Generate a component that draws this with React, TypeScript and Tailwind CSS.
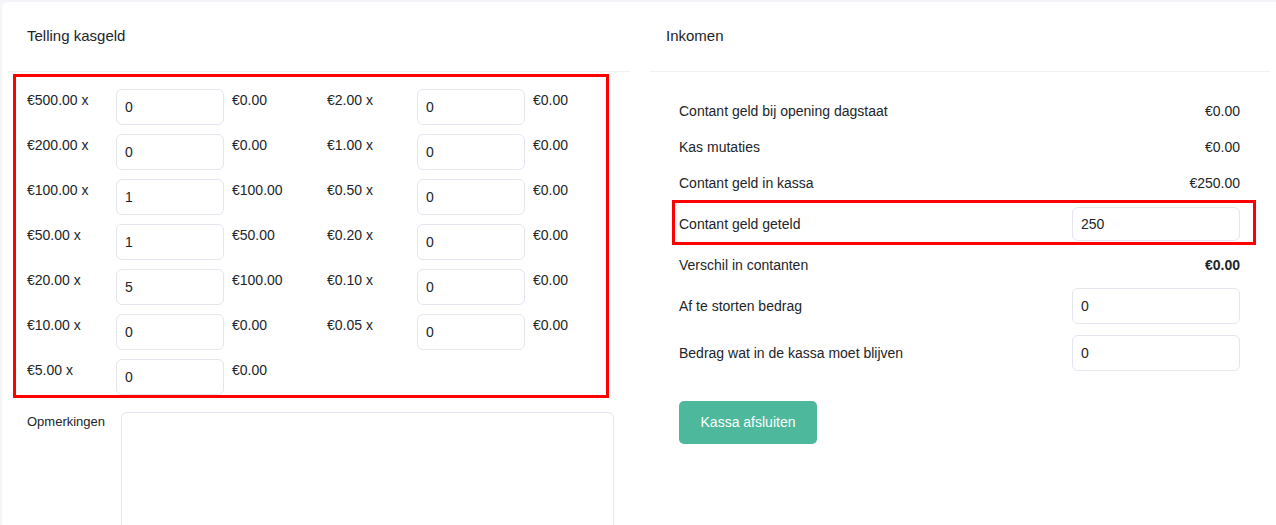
import { useState } from 'react';

const leftCoins = [
  { label: '€500.00 x', count: '0', total: '€0.00' },
  { label: '€200.00 x', count: '0', total: '€0.00' },
  { label: '€100.00 x', count: '1', total: '€100.00' },
  { label: '€50.00 x', count: '1', total: '€50.00' },
  { label: '€20.00 x', count: '5', total: '€100.00' },
  { label: '€10.00 x', count: '0', total: '€0.00' },
  { label: '€5.00 x', count: '0', total: '€0.00' },
];

const rightCoins = [
  { label: '€2.00 x', count: '0', total: '€0.00' },
  { label: '€1.00 x', count: '0', total: '€0.00' },
  { label: '€0.50 x', count: '0', total: '€0.00' },
  { label: '€0.20 x', count: '0', total: '€0.00' },
  { label: '€0.10 x', count: '0', total: '€0.00' },
  { label: '€0.05 x', count: '0', total: '€0.00' },
];

type Coin = { label: string; count: string; total: string };

function CoinColumn({ coins, labelWidth }: { coins: Coin[]; labelWidth: string }) {
  return (
    <div className="flex w-[300px] shrink-0 flex-col gap-y-[9px]">
      {coins.map((c) => (
        <div key={c.label} className="flex items-start">
          <div className={`${labelWidth} shrink-0 pt-[1px] leading-[20px]`}>{c.label}</div>
          <input
            defaultValue={c.count}
            className="h-[36px] w-[108px] shrink-0 rounded-md border border-[#e3e5ef] bg-white px-2 text-[14px] text-[#212529] outline-none"
          />
          <div className="ml-[8px] pt-[1px] leading-[20px]">{c.total}</div>
        </div>
      ))}
    </div>
  );
}

function FieldInput({ value }: { value: string }) {
  return (
    <input
      defaultValue={value}
      className="h-[36px] w-[168px] rounded-md border border-[#e3e5ef] bg-white px-2 text-[14px] text-[#212529] outline-none"
    />
  );
}

export default function App() {
  const [notes, setNotes] = useState('');

  return (
    <div
      className="min-h-screen bg-[#f3f5f8] pl-[2px] pt-[2px] text-[14px] text-[#212529]"
      style={{ fontFamily: '"Liberation Sans", Arial, sans-serif' }}
    >
      <div className="flex h-[523px] overflow-hidden rounded-tl-md bg-white">
        {/* Telling kasgeld */}
        <div className="ml-[6px] w-[622px] shrink-0">
          <div className="flex h-[70px] items-center border-b border-[#eef0f3] pl-[19px] text-[15px]">
            Telling kasgeld
          </div>

          <div className="ml-[5px] mt-[2px] w-[596px] overflow-hidden border-[3px] border-[#ff0000] pl-[11px] pt-[12px]">
            <div className="flex">
              <CoinColumn coins={leftCoins} labelWidth="w-[89px]" />
              <CoinColumn coins={rightCoins} labelWidth="w-[90px]" />
            </div>
          </div>

          <div className="mt-[14px] flex pl-[19px]">
            <div className="w-[94px] pt-[2px] text-[13px] leading-[16px]">Opmerkingen</div>
            <textarea
              value={notes}
              onChange={(e) => setNotes(e.target.value)}
              className="h-[140px] w-[493px] resize-none rounded-md border border-[#e3e5ef] bg-white outline-none"
            />
          </div>
        </div>

        {/* Inkomen */}
        <div className="ml-[20px] w-[620px] shrink-0">
          <div className="flex h-[70px] items-center border-b border-[#eef0f3] pl-[16px] text-[15px]">
            Inkomen
          </div>

          <div className="pt-[21px]">
            <div className="flex h-[36px] items-center justify-between pl-[29px] pr-[30px]">
              <span>Contant geld bij opening dagstaat</span>
              <span>€0.00</span>
            </div>
            <div className="flex h-[36px] items-center justify-between pl-[29px] pr-[30px]">
              <span>Kas mutaties</span>
              <span>€0.00</span>
            </div>
            <div className="flex h-[36px] items-center justify-between pl-[29px] pr-[30px]">
              <span>Contant geld in kassa</span>
              <span>€250.00</span>
            </div>

            <div className="-mt-[1px] ml-[22px] mr-[14px] flex items-center justify-between border-[3px] border-[#ff0000] pb-[1px] pl-[4px] pr-[13px] pt-[4px]">
              <span>Contant geld geteld</span>
              <input
                defaultValue="250"
                className="h-[34px] w-[168px] rounded-md border border-[#e3e5ef] bg-white px-2 text-[14px] text-[#212529] outline-none"
              />
            </div>

            <div className="flex h-[40px] items-center justify-between pl-[29px] pr-[30px]">
              <span>Verschil in contanten</span>
              <span className="font-bold">€0.00</span>
            </div>

            <div className="mt-[3px] flex items-center justify-between pl-[29px] pr-[30px]">
              <span>Af te storten bedrag</span>
              <FieldInput value="0" />
            </div>

            <div className="mt-[11px] flex items-center justify-between pl-[29px] pr-[30px]">
              <span>Bedrag wat in de kassa moet blijven</span>
              <FieldInput value="0" />
            </div>

            <div className="mt-[30px] pl-[29px]">
              <button className="h-[43px] w-[138px] rounded-[5px] bg-[#4db89b] text-[14px] text-white">
                Kassa afsluiten
              </button>
            </div>
          </div>
        </div>
      </div>
    </div>
  );
}
